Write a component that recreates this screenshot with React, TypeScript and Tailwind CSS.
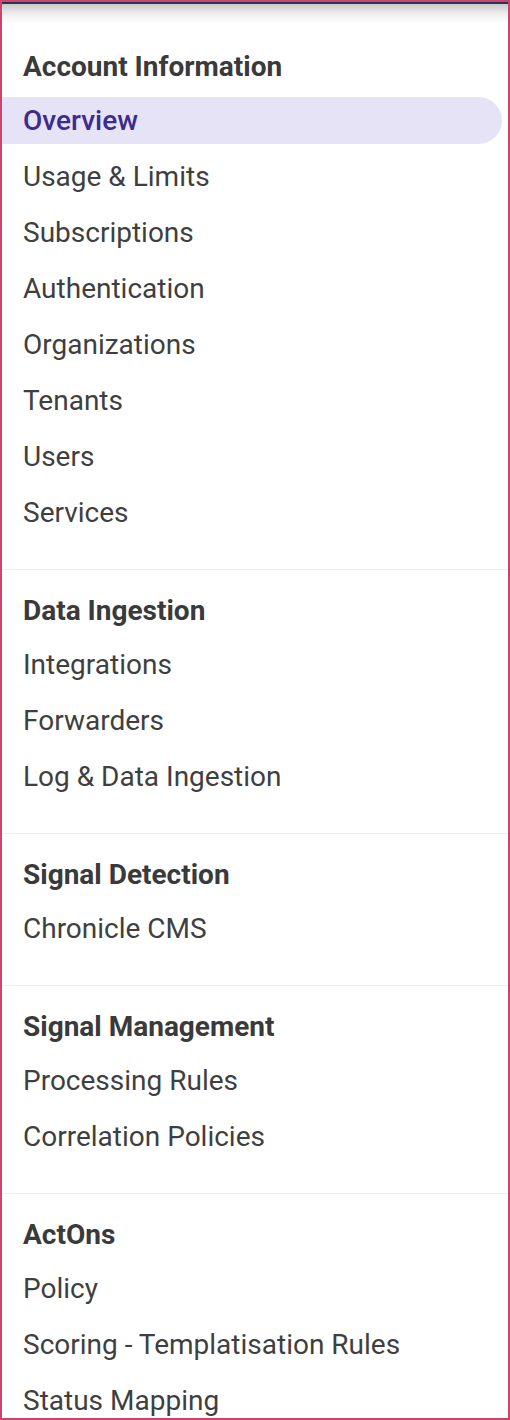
const sections = [
  {
    title: "Account Information",
    items: ["Overview", "Usage & Limits", "Subscriptions", "Authentication", "Organizations", "Tenants", "Users", "Services"],
  },
  { title: "Data Ingestion", items: ["Integrations", "Forwarders", "Log & Data Ingestion"] },
  { title: "Signal Detection", items: ["Chronicle CMS"] },
  { title: "Signal Management", items: ["Processing Rules", "Correlation Policies"] },
  { title: "ActOns", items: ["Policy", "Scoring - Templatisation Rules", "Status Mapping"] },
];

const App = () => {
  const active = "Overview";

  return (
    <div className="w-[510px] h-[1420px] overflow-hidden bg-white border-2 border-[#c9456b] font-['Roboto',sans-serif]">
      <div className="h-[2px] bg-[#2d3552]" />
      <div className="h-5 bg-gradient-to-b from-[#c9c9c9] via-[#efefef] to-white" />
      <nav className="pt-4">
        {sections.map((section, i) => (
          <div key={section.title} className={i > 0 ? "border-t border-[#ececec] pt-[14px]" : ""}>
            <h2 className="h-[52px] flex items-center pt-[2px] pl-[21px] text-[28px] font-bold text-[#3a3a3a]">
              {section.title}
            </h2>
            <ul className="pb-[29px]">
              {section.items.map((item) => (
                <li key={item} className="h-14 flex items-center">
                  <a
                    href="#"
                    className={`flex items-center h-[47px] w-[500px] pt-[2px] pl-[21px] rounded-r-full text-[28px] ${
                      item === active ? "bg-[#e6e3f6] text-[#3d2b8e] font-medium" : "text-[#3f3f3f]"
                    }`}
                  >
                    {item}
                  </a>
                </li>
              ))}
            </ul>
          </div>
        ))}
      </nav>
    </div>
  );
};

export default App;
